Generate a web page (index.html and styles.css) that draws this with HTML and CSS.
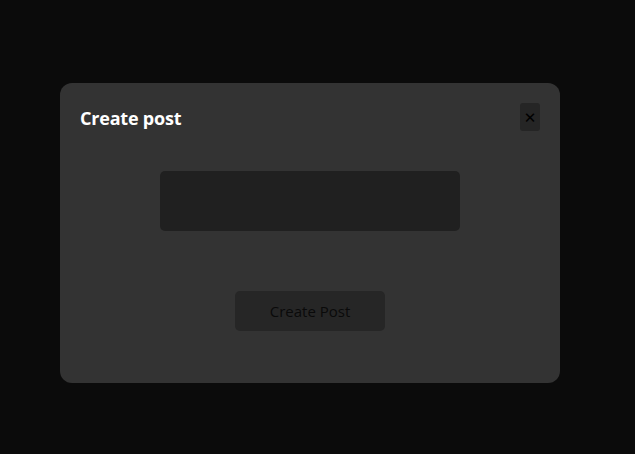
FILE: index.html
```html
<!DOCTYPE html>
<html>
<head>
<meta charset="utf-8">
<link rel="stylesheet" href="styles.css">
</head>
<body>
<div class="overlay">
  <div class="modal">
    <div class="header">
      <h2 class="title">Create post</h2>
      <button class="close">&#x2715;</button>
    </div>
    <div class="body">
      <textarea class="input"></textarea>
      <button class="submit">Create Post</button>
    </div>
  </div>
</div>
</body>
</html>
```

FILE: styles.css
```css
html, body {
  margin: 0;
  padding: 0;
  background: #0b0b0b;
  font-family: "Open Sans", "Noto Sans", sans-serif;
}
.overlay {
  width: 635px;
  height: 454px;
  display: flex;
  justify-content: flex-start;
  padding: 83px 0 0 60px;
  box-sizing: border-box;
}
.modal {
  width: 500px;
  height: 300px;
  background: #333333;
  border-radius: 12px;
  padding: 20px;
  box-sizing: border-box;
  display: flex;
  flex-direction: column;
}
.header {
  display: flex;
  justify-content: space-between;
  align-items: flex-start;
}
.title {
  margin: 0;
  margin-top: 3px;
  color: #ffffff;
  font-size: 18px;
  font-weight: 700;
  line-height: 24px;
  letter-spacing: -0.2px;
}
.close {
  width: 20px;
  height: 28px;
  padding: 0;
  border: none;
  border-radius: 3px;
  background: #252525;
  color: #000000;
  font-size: 15px;
  font-weight: 700;
  font-family: "DejaVu Sans", sans-serif;
  line-height: 30px;
  margin-top: 0;
}
.body {
  display: flex;
  flex-direction: column;
  align-items: center;
  margin-top: 40px;
}
.input {
  width: 300px;
  height: 60px;
  background: #202020;
  border: none;
  border-radius: 5px;
  resize: none;
  outline: none;
  display: block;
  box-sizing: border-box;
}
.submit {
  margin-top: 60px;
  width: 150px;
  height: 40px;
  border: none;
  border-radius: 5px;
  background: #262626;
  color: #0a0a0a;
  font-family: "Open Sans", "Noto Sans", sans-serif;
  font-size: 15px;
}
```
